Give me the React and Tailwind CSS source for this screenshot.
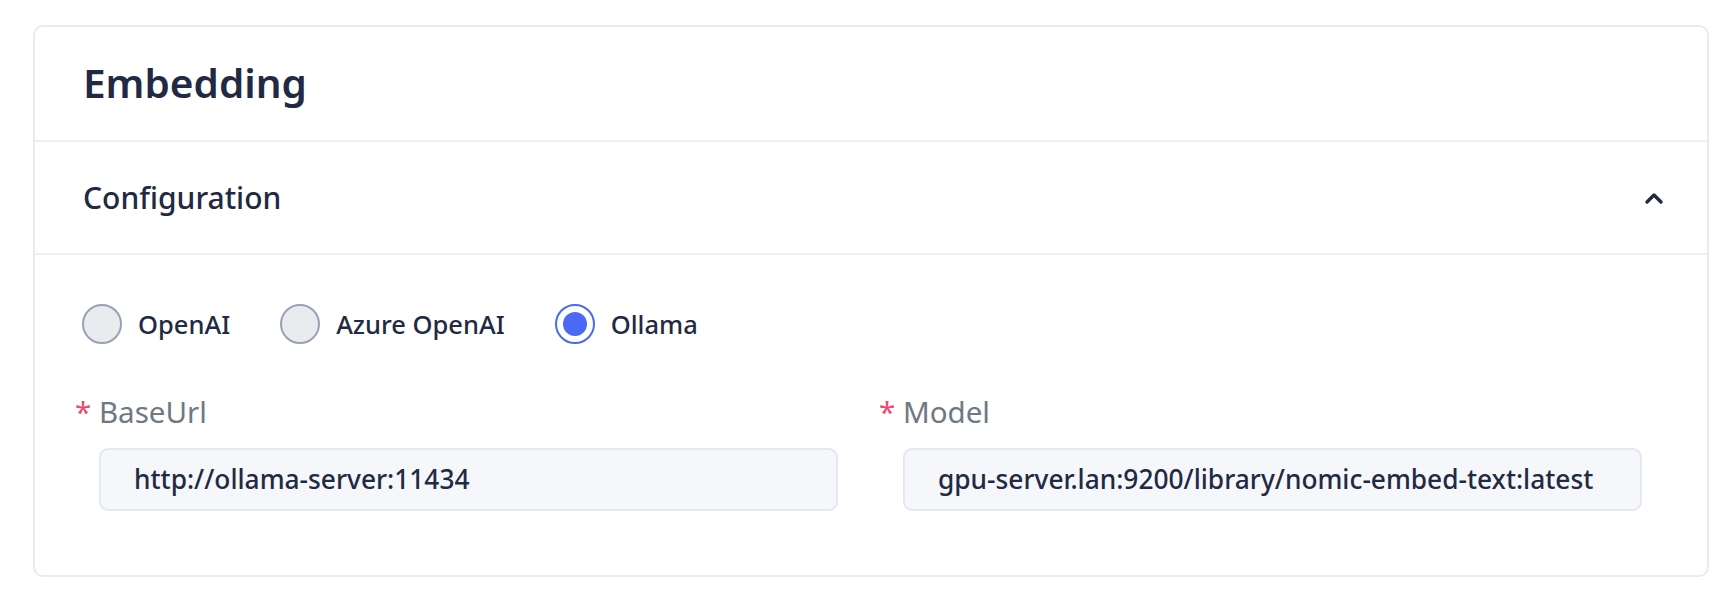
import React from "react";

function Radio({ label, checked }) {
  return (
    <div className="flex items-center">
      {checked ? (
        <span className="flex h-[40px] w-[40px] items-center justify-center rounded-full border-[2px] border-[#4a69f4] bg-white">
          <span className="h-[24px] w-[24px] rounded-full bg-[#4a69f4]" />
        </span>
      ) : (
        <span className="h-[40px] w-[40px] rounded-full border-[2px] border-[#98a1b5] bg-[#e9ebef]" />
      )}
      <span className="ml-[16px] text-[25.5px] font-[550] leading-[40px] text-[#222a43]">{label}</span>
    </div>
  );
}

function Field({ label, value }) {
  return (
    <div className="flex flex-col">
      <div className="h-[36px] text-[29.5px] leading-[36px] text-[#707883]">
        <span className="text-[#ee4a6d]">*</span> {label}
      </div>
      <div className="ml-[24px] mt-[18px] flex h-[63px] items-center rounded-[9px] border-[2px] border-[#e4e8f0] bg-[#f6f7fb] pl-[33px] text-[26.3px] font-medium text-[#222a43]">
        {value}
      </div>
    </div>
  );
}

export default function App() {
  return (
    <div
      className="bg-white pl-[33px] pr-[23px] pt-[25px]"
      style={{ fontFamily: '"Noto Sans", "Open Sans", sans-serif' }}
    >
      <div className="rounded-[10px] border-[2px] border-[#e8ebf3] bg-white">
        <div className="flex h-[115px] items-center border-b-[2px] border-[#eceff5] pl-[48px]">
          <h1 className="text-[40.5px] font-semibold leading-none text-[#222a43]">Embedding</h1>
        </div>
        <div className="flex h-[113px] items-center justify-between border-b-[2px] border-[#eceff5] pl-[48px] pr-[43px]">
          <span className="text-[30px] font-medium leading-none text-[#222a43]">Configuration</span>
          <svg width="20" height="14" viewBox="0 0 20 14" fill="none">
            <polyline points="3,11 10,4 17,11" stroke="#222a43" strokeWidth="3.4" strokeLinecap="round" strokeLinejoin="round" />
          </svg>
        </div>
        <div className="pb-[64px] pl-[40px] pr-[65px] pt-[49px]">
          <div className="ml-[7px] flex items-center gap-[50px]">
            <Radio label="OpenAI" />
            <Radio label="Azure OpenAI" />
            <Radio label="Ollama" checked />
          </div>
          <div className="mt-[50px] grid grid-cols-2 gap-x-[41px]">
            <Field label="BaseUrl" value="http://ollama-server:11434" />
            <Field label="Model" value="gpu-server.lan:9200/library/nomic-embed-text:latest" />
          </div>
        </div>
      </div>
    </div>
  );
}
